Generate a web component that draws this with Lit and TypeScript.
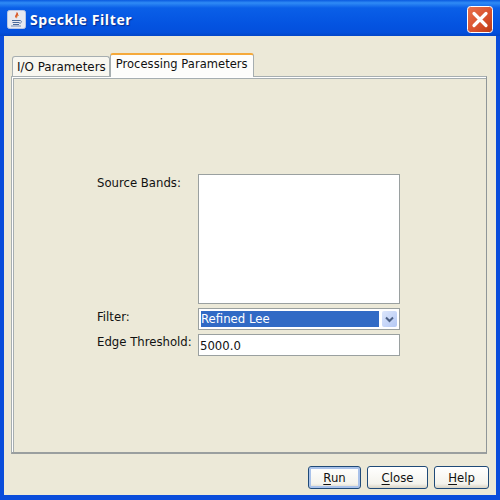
import { LitElement, html, css } from 'lit';
import { customElement } from 'lit/decorators.js';

@customElement('app-root')
export class AppRoot extends LitElement {
  static styles = css`
    :host {
      display: block;
      width: 500px;
      height: 500px;
      font-family: 'DejaVu Sans', sans-serif;
      font-size: 11.7px;
      color: #111;
    }
    .window {
      box-sizing: border-box;
      width: 500px;
      height: 500px;
      display: flex;
      flex-direction: column;
      background: #0a4ddb;
      padding: 0 4px 5px 4px;
    }
    .titlebar {
      box-sizing: border-box;
      height: 36px;
      flex: none;
      margin: 0 -4px;
      padding: 2px 7px 0;
      display: flex;
      align-items: center;
      background: linear-gradient(#0a5ae0 0%, #2f8bf5 8%, #0a5fe8 22%, #0453e0 70%, #0450dc 90%, #0347c8 100%);
    }
    .app-icon {
      width: 19px;
      height: 19px;
      margin-right: 4px;
      flex: none;
    }
    .title {
      font-family: 'Open Sans', sans-serif;
      font-weight: bold;
      font-size: 14px;
      letter-spacing: 0.6px;
      color: #fff;
      text-shadow: 1px 1px 1px #0b2d8c;
      flex: 1;
    }
    .close-x {
      width: 26px;
      height: 27px;
      flex: none;
    }
    .body {
      flex: 1;
      background: #ece9d8;
      display: flex;
      flex-direction: column;
      padding: 16px 7px 0 7px;
      min-height: 0;
    }
    .tabs {
      display: flex;
      align-items: flex-end;
      height: 24px;
      flex: none;
      padding-left: 1px;
    }
    .tab {
      box-sizing: border-box;
      background: #f8f7f0;
      border: 1px solid #a6aeb0;
      border-bottom: none;
      border-radius: 3px 3px 0 0;
      height: 20px;
      padding: 3px 3px 0 4px;
      white-space: nowrap;
      font-size: 11.9px;
    }
    .tab.active {
      height: 24px;
      background: #fdfdfb;
      border-top: 2px solid #f5a93a;
      padding: 2px 5px 0 5px;
      margin-bottom: -1px;
      position: relative;
      z-index: 1;
      font-size: 11.5px;
      letter-spacing: 0.05px;
    }
    .panel {
      box-sizing: border-box;
      flex: 1;
      margin-right: 2px;
      margin-bottom: 2px;
      border: 1px solid #a6aeb0;
      border-right-color: #8f9698;
      border-bottom: 2px solid #9a9f9f;
      box-shadow: inset 1px 1px 0 #fff, inset 2px 2px 0 #a6aeb0;
      display: flex;
      align-items: center;
      justify-content: center;
      padding: 1px 1px 0 0;
    }
    .form {
      display: grid;
      grid-template-columns: 101px 202px;
      row-gap: 4px;
    }
    .label {
      padding-top: 2px;
    }
    .label.edge {
      padding-top: 1px;
    }
    .list {
      box-sizing: border-box;
      height: 130px;
      background: #fff;
      border: 1px solid #9aa0a0;
    }
    .combo {
      box-sizing: border-box;
      height: 22px;
      border: 1px solid #9aa0a0;
      background: #fff;
      display: flex;
      padding: 2px;
      gap: 3px;
    }
    .combo .value {
      flex: 1;
      background: #316ac5;
      color: #fff;
      line-height: 16px;
    }
    .arrow {
      width: 15px;
      flex: none;
      background: linear-gradient(135deg, #dce6fb, #b4c8f5);
      border-radius: 2px;
      display: flex;
      align-items: center;
      justify-content: center;
    }
    .field {
      box-sizing: border-box;
      height: 22px;
      border: 1px solid #9aa0a0;
      background: #fff;
      padding: 3px 1px 0;
      line-height: 16px;
    }
    .buttons {
      flex: none;
      height: 39px;
      display: flex;
      justify-content: flex-end;
      align-items: flex-start;
      gap: 6px;
      padding-top: 10px;
      box-sizing: border-box;
    }
    button {
      box-sizing: border-box;
      height: 23px;
      font: inherit;
      color: #111;
      padding: 0;
      border: 1px solid #1f4a78;
      border-radius: 3px;
      background: linear-gradient(#fff, #f4f3ec 80%, #d8d3c4);
    }
    button.default {
      box-shadow: inset 0 0 0 2px #a9c2ea;
    }
    .run { width: 53px; }
    .close { width: 61px; }
    .help { width: 55px; }
    u { text-underline-offset: 2px; }
  `;

  render() {
    return html`
      <div class="window">
        <div class="titlebar">
          <svg class="app-icon" viewBox="0 0 19 19">
            <rect x="0.5" y="0.5" width="18" height="18" rx="2" fill="#e8eaf0" stroke="#b8c6e4" />
            <path d="M9 2.5c1.5 1.5-2 3-.5 5 .3.5 1 1 1 1-1-1.5 3-3 1-6z" fill="#d8572a" />
            <path d="M12 5c-2 1-3 2-2 3" fill="none" stroke="#e8842a" stroke-width="0.8" />
            <path d="M5 10.5h8M5.5 12.5h7M6 14.5h6" stroke="#4a6a9a" stroke-width="1.1" />
            <path d="M13 10.5c2 0 2 2.5-.5 3" fill="none" stroke="#4a6a9a" stroke-width="0.8" />
            <path d="M4 16h10" stroke="#6a84ae" stroke-width="0.9" />
          </svg>
          <span class="title">Speckle Filter</span>
          <svg class="close-x" viewBox="0 0 26 27">
            <defs>
              <linearGradient id="cg" x1="0" y1="0" x2="1" y2="1">
                <stop offset="0" stop-color="#e8734f" />
                <stop offset="0.6" stop-color="#d8502c" />
                <stop offset="1" stop-color="#b83a14" />
              </linearGradient>
            </defs>
            <rect x="0.5" y="0.5" width="25" height="26" rx="3" fill="url(#cg)" stroke="#fff" />
            <path d="M7 7.5L19 19.5M19 7.5L7 19.5" stroke="#fff" stroke-width="3.2" stroke-linecap="round" />
          </svg>
        </div>
        <div class="body">
          <div class="tabs">
            <div class="tab">I/O Parameters</div>
            <div class="tab active">Processing Parameters</div>
          </div>
          <div class="panel">
            <div class="form">
              <div class="label">Source Bands:</div>
              <div class="list"></div>
              <div class="label">Filter:</div>
              <div class="combo">
                <div class="value">Refined Lee</div>
                <div class="arrow">
                  <svg width="9" height="7" viewBox="0 0 9 7">
                    <path d="M1 1.5L4.5 5L8 1.5" fill="none" stroke="#4d6185" stroke-width="2" />
                  </svg>
                </div>
              </div>
              <div class="label edge">Edge Threshold:</div>
              <div class="field">5000.0</div>
            </div>
          </div>
          <div class="buttons">
            <button class="run default"><u>R</u>un</button>
            <button class="close"><u>C</u>lose</button>
            <button class="help"><u>H</u>elp</button>
          </div>
        </div>
      </div>
    `;
  }
}
